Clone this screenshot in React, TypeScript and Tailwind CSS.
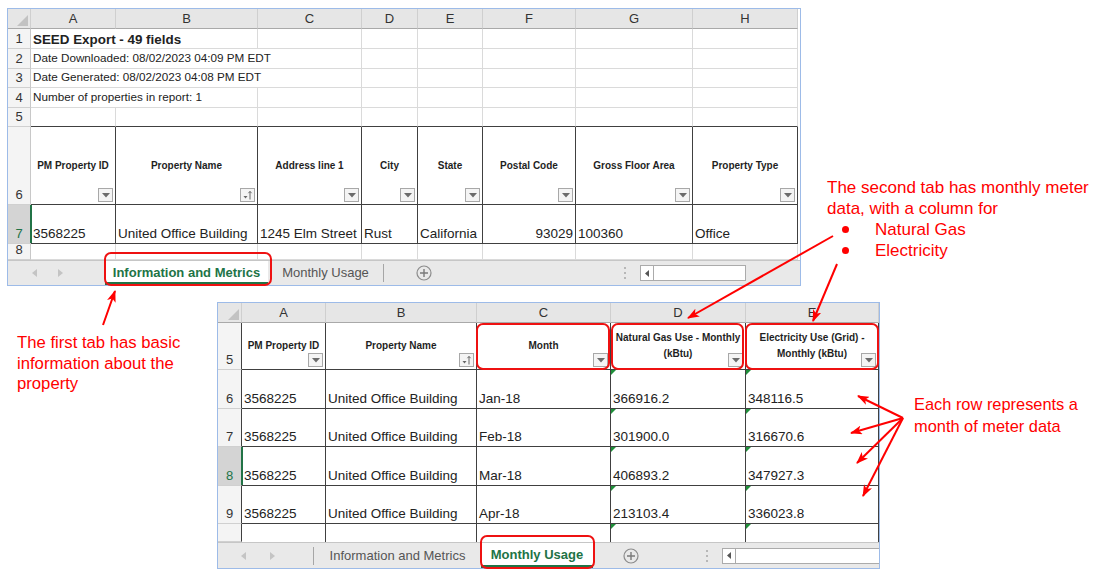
import clsx from "clsx";
import { ReactNode } from "react";

const FONT = "font-['Liberation_Sans',Arial,sans-serif]";

const FilterBtn = ({ sort = false }: { sort?: boolean }) => (
  <span className="absolute right-[2px] bottom-[2px] w-[15px] h-[14px] border border-[#a8a8a8] bg-[#f4f4f4] flex items-center justify-center">
    {sort ? (
      <svg width="11" height="10" viewBox="0 0 11 10">
        <path d="M1.5 6h4l-2 2.5z" fill="#666" />
        <path d="M8 9.5V1.5M6.4 3.2L8 1.4l1.6 1.8" stroke="#666" strokeWidth="1" fill="none" />
      </svg>
    ) : (
      <svg width="8" height="5" viewBox="0 0 8 5">
        <path d="M0 0h8L4 4.5z" fill="#6b6b6b" />
      </svg>
    )}
  </span>
);

interface CellProps {
  w: string;
  children?: ReactNode;
  dark?: boolean;
  darkBottom?: boolean;
  noBottom?: boolean;
  align?: "left" | "right";
  head?: boolean;
  filter?: "down" | "sort";
  flag?: boolean;
  active?: boolean;
  className?: string;
}

const Cell = ({ w, children, dark, darkBottom, noBottom, align = "left", head, filter, flag, active, className }: CellProps) => (
  <div
    className={clsx(
      "relative shrink-0 h-full border-r flex px-[2px]",
      w,
      !noBottom && "border-b",
      dark ? "border-r-[#404040]" : "border-r-[#dadada]",
      darkBottom ? "border-b-[#404040]" : "border-b-[#dadada]",
      head
        ? "items-center justify-center text-center font-bold text-[10px] leading-[16px] text-[#1f1f1f]"
        : clsx("items-end whitespace-nowrap pb-[1px] text-[13.5px] leading-[17px] text-[#222]", align === "right" ? "justify-end" : "justify-start"),
      className
    )}
  >
    {children}
    {flag && <span className="absolute left-0 top-0 w-0 h-0 border-t-[5px] border-t-[#1f8f3a] border-r-[5px] border-r-transparent" />}
    {active && <span className="absolute left-[-1px] top-0 bottom-0 w-[2px] bg-[#217346]" />}
    {filter && <FilterBtn sort={filter === "sort"} />}
  </div>
);

interface RowProps {
  h: string;
  n?: string;
  numW: string;
  active?: boolean;
  darkNum?: boolean;
  children: ReactNode;
}

const Row = ({ h, n, numW, active, darkNum, children }: RowProps) => (
  <div className={clsx("flex shrink-0", h)}>
    <div
      className={clsx(
        "shrink-0 h-full border-r border-b border-b-[#d0d0d0] flex items-end justify-center pb-[1px] text-[13px] leading-[17px]",
        numW,
        darkNum ? "border-r-[#404040]" : "border-r-[#c8c8c8]",
        active ? "bg-[#d4d4d4] text-[#217346]" : "bg-[#f4f4f4] text-[#333]"
      )}
    >
      {n}
    </div>
    {children}
  </div>
);

const Letters = ({ numW, cols }: { numW: string; cols: [string, string][] }) => (
  <div className="flex shrink-0 h-[20px]">
    <div className={clsx("shrink-0 h-full bg-[#e6e6e6] border-r border-b border-r-[#cfcfcf] border-b-[#a9a9a9] flex items-end justify-end p-[2px]", numW)}>
      <svg width="11" height="11" viewBox="0 0 11 11">
        <path d="M11 0V11H0z" fill="#c2c2c2" />
      </svg>
    </div>
    {cols.map(([w, l]) => (
      <div
        key={l}
        className={clsx("shrink-0 h-full bg-[#e6e6e6] border-r border-b border-r-[#cfcfcf] border-b-[#a9a9a9] flex items-center justify-center text-[13px] text-[#333]", w)}
      >
        {l}
      </div>
    ))}
  </div>
);

const NavArrows = ({ gap }: { gap: string }) => (
  <div className={clsx("flex items-center", gap)}>
    <svg width="5" height="8" viewBox="0 0 5 8">
      <path d="M5 0v8L0 4z" fill="#c4c4c4" />
    </svg>
    <svg width="5" height="8" viewBox="0 0 5 8">
      <path d="M0 0v8l5-4z" fill="#c4c4c4" />
    </svg>
  </div>
);

const PlusCircle = () => (
  <svg width="16" height="16" viewBox="0 0 16 16" className="shrink-0">
    <circle cx="8" cy="8" r="7" fill="none" stroke="#8c8c8c" strokeWidth="1.2" />
    <path d="M8 4v8M4 8h8" stroke="#7a7a7a" strokeWidth="1.4" />
  </svg>
);

const Dots = () => (
  <svg width="4" height="14" viewBox="0 0 4 14" className="shrink-0">
    <circle cx="2" cy="2" r="1" fill="#a6a6a6" />
    <circle cx="2" cy="7" r="1" fill="#a6a6a6" />
    <circle cx="2" cy="12" r="1" fill="#a6a6a6" />
  </svg>
);

const ScrollBox = ({ track }: { track: string }) => (
  <div className="flex items-center shrink-0">
    <div className="w-[14px] h-[16px] border border-[#ababab] bg-white flex items-center justify-center">
      <svg width="4" height="7" viewBox="0 0 4 7">
        <path d="M4 0v7L0 3.5z" fill="#555" />
      </svg>
    </div>
    <div className={clsx("h-[16px] border border-l-0 border-[#ababab] bg-white", track)} />
  </div>
);

const Tab = ({ w, active, children }: { w: string; active?: boolean; children: ReactNode }) => (
  <div
    className={clsx(
      "shrink-0 h-full flex items-center justify-center text-[13px]",
      w,
      active ? "bg-white border-b-[3px] border-b-[#217346] font-bold text-[#217346] pt-[2px]" : "text-[#555]"
    )}
  >
    {children}
  </div>
);

const TopSheet = () => {
  const W1 = "w-[23px]";
  const cols: [string, string][] = [
    ["w-[85px]", "A"],
    ["w-[142px]", "B"],
    ["w-[104px]", "C"],
    ["w-[56px]", "D"],
    ["w-[65px]", "E"],
    ["w-[93px]", "F"],
    ["w-[117px]", "G"],
    ["w-[105px]", "H"],
  ];
  const rest = ["w-[104px]", "w-[56px]", "w-[65px]", "w-[93px]", "w-[117px]", "w-[105px]"];
  const heads: [string, "down" | "sort"][] = [
    ["PM Property ID", "down"],
    ["Property Name", "sort"],
    ["Address line 1", "down"],
    ["City", "down"],
    ["State", "down"],
    ["Postal Code", "down"],
    ["Gross Floor Area", "down"],
    ["Property Type", "down"],
  ];
  const values: [string, "left" | "right"][] = [
    ["3568225", "left"],
    ["United Office Building", "left"],
    ["1245 Elm Street", "left"],
    ["Rust", "left"],
    ["California", "left"],
    ["93029", "right"],
    ["100360", "left"],
    ["Office", "left"],
  ];

  return (
    <div className="absolute left-[7px] top-[8px] w-[794px] h-[278px] border border-[#9dbbe8] bg-white flex flex-col overflow-hidden">
      <Letters numW={W1} cols={cols} />
      <Row h="h-[20px]" n="1" numW={W1}>
        <Cell w="w-[227px]" className="!text-[13.4px] font-bold !pb-0">SEED Export - 49 fields</Cell>
        {rest.map((w, i) => <Cell key={i} w={w} />)}
      </Row>
      <Row h="h-[20px]" n="2" numW={W1}>
        <Cell w="w-[331px]" className="!text-[11.7px] !pb-[2px]">Date Downloaded: 08/02/2023 04:09 PM EDT</Cell>
        {rest.slice(1).map((w, i) => <Cell key={i} w={w} />)}
      </Row>
      <Row h="h-[19px]" n="3" numW={W1}>
        <Cell w="w-[331px]" className="!text-[11.7px] !pb-[2px]">Date Generated: 08/02/2023 04:08 PM EDT</Cell>
        {rest.slice(1).map((w, i) => <Cell key={i} w={w} />)}
      </Row>
      <Row h="h-[20px]" n="4" numW={W1}>
        <Cell w="w-[227px]" className="!text-[11.7px] !pb-[2px]">Number of properties in report: 1</Cell>
        {rest.map((w, i) => <Cell key={i} w={w} />)}
      </Row>
      <Row h="h-[19px]" n="5" numW={W1}>
        {cols.map(([w]) => <Cell key={w} w={w} darkBottom />)}
      </Row>
      <Row h="h-[78px]" n="6" numW={W1}>
        {cols.map(([w], i) => (
          <Cell key={w} w={w} dark darkBottom head filter={heads[i][1]}>
            {heads[i][0]}
          </Cell>
        ))}
      </Row>
      <Row h="h-[39px]" n="7" numW={W1} active>
        {cols.map(([w], i) => (
          <Cell key={w} w={w} dark darkBottom align={values[i][1]} active={i === 0}>
            {values[i][0]}
          </Cell>
        ))}
      </Row>
      <Row h="h-[16px]" n="8" numW={W1}>
        {cols.map(([w]) => <Cell key={w} w={w} />)}
      </Row>
      <div className="flex items-center h-[25px] shrink-0 bg-[#e9e9e9] border-t border-[#c6c6c6]">
        <div className="w-[97px] h-full flex items-center pl-[24px] shrink-0">
          <NavArrows gap="gap-[21px]" />
        </div>
        <Tab w="w-[163px]" active>Information and Metrics</Tab>
        <Tab w="w-[115px]">Monthly Usage</Tab>
        <div className="w-px h-[18px] bg-[#a6a6a6] shrink-0" />
        <div className="ml-[32px]">
          <PlusCircle />
        </div>
        <div className="ml-[191px]">
          <Dots />
        </div>
        <div className="ml-[13px]">
          <ScrollBox track="w-[92px]" />
        </div>
      </div>
    </div>
  );
};

const BottomSheet = () => {
  const W2 = "w-[24px]";
  const cols: [string, string][] = [
    ["w-[84px]", "A"],
    ["w-[151px]", "B"],
    ["w-[134px]", "C"],
    ["w-[135px]", "D"],
    ["w-[133px]", "E"],
  ];
  const data = [
    ["6", "Jan-18", "366916.2", "348116.5"],
    ["7", "Feb-18", "301900.0", "316670.6"],
    ["8", "Mar-18", "406893.2", "347927.3"],
    ["9", "Apr-18", "213103.4", "336023.8"],
  ];
  const heights = ["h-[39px]", "h-[38px]", "h-[39px]", "h-[38px]"];

  return (
    <div className="absolute left-[217px] top-[302px] w-[663px] h-[267px] border border-[#9dbbe8] bg-white flex flex-col overflow-hidden">
      <Letters numW={W2} cols={cols} />
      <Row h="h-[47px]" n="5" numW={W2} darkNum>
        <Cell w="w-[84px]" dark darkBottom head filter="down">PM Property ID</Cell>
        <Cell w="w-[151px]" dark darkBottom head filter="sort">Property Name</Cell>
        <Cell w="w-[134px]" dark darkBottom head filter="down">Month</Cell>
        <Cell w="w-[135px]" dark darkBottom head filter="down">
          <span>
            Natural Gas Use - Monthly
            <br />
            (kBtu)
          </span>
        </Cell>
        <Cell w="w-[133px]" dark darkBottom head filter="down">
          <span>
            Electricity Use (Grid) -
            <br />
            Monthly (kBtu)
          </span>
        </Cell>
      </Row>
      {data.map(([n, month, gas, elec], i) => (
        <Row key={n} h={heights[i]} n={n} numW={W2} darkNum active={n === "8"}>
          <Cell w="w-[84px]" dark darkBottom active={n === "8"}>3568225</Cell>
          <Cell w="w-[151px]" dark darkBottom>United Office Building</Cell>
          <Cell w="w-[134px]" dark darkBottom>{month}</Cell>
          <Cell w="w-[135px]" dark darkBottom flag>{gas}</Cell>
          <Cell w="w-[133px]" dark darkBottom flag>{elec}</Cell>
        </Row>
      ))}
      <Row h="h-[18px]" numW={W2} darkNum>
        <Cell w="w-[84px]" dark noBottom />
        <Cell w="w-[151px]" dark noBottom />
        <Cell w="w-[134px]" dark noBottom />
        <Cell w="w-[135px]" dark noBottom flag />
        <Cell w="w-[133px]" dark noBottom flag />
      </Row>
      <div className="flex items-center h-[26px] shrink-0 bg-[#e9e9e9] border-t border-[#c6c6c6]">
        <div className="w-[95px] h-full flex items-center pl-[23px] shrink-0">
          <NavArrows gap="gap-[24px]" />
        </div>
        <div className="w-px h-[18px] bg-[#a6a6a6] shrink-0" />
        <Tab w="w-[167px]">Information and Metrics</Tab>
        <Tab w="w-[112px]" active>Monthly Usage</Tab>
        <div className="ml-[30px]">
          <PlusCircle />
        </div>
        <div className="ml-[66px]">
          <Dots />
        </div>
        <div className="ml-[13px]">
          <ScrollBox track="w-[150px]" />
        </div>
      </div>
    </div>
  );
};

const Arrows = () => {
  const lines: [number, number, number, number][] = [
    [103, 325, 115, 291],
    [833, 236, 688, 318],
    [837, 264, 813, 321],
    [903, 418, 858, 396],
    [903, 418, 851, 433],
    [903, 418, 857, 463],
    [903, 418, 863, 496],
  ];
  return (
    <svg className="absolute left-0 top-0 pointer-events-none" width="1096" height="575">
      <defs>
        <marker id="head" markerUnits="userSpaceOnUse" markerWidth="12" markerHeight="9" refX="11" refY="4.5" orient="auto">
          <path d="M0 0L12 4.5L0 9L3 4.5z" fill="#ff0000" />
        </marker>
      </defs>
      {lines.map(([x1, y1, x2, y2], i) => (
        <line key={i} x1={x1} y1={y1} x2={x2} y2={y2} stroke="#ff0000" strokeWidth="2" markerEnd="url(#head)" />
      ))}
    </svg>
  );
};

const Callout = ({ className }: { className: string }) => (
  <div className={clsx("absolute border-2 border-[#ee1111] rounded-[7px] pointer-events-none", className)} />
);

export default function App() {
  return (
    <div className={clsx("relative w-[1096px] h-[575px] bg-white overflow-hidden", FONT)}>
      <TopSheet />
      <BottomSheet />

      <Callout className="left-[104px] top-[252px] w-[168px] h-[34px]" />
      <Callout className="left-[480px] top-[535px] w-[115px] h-[34px]" />
      <Callout className="left-[476px] top-[323px] w-[134px] h-[47px]" />
      <Callout className="left-[611px] top-[323px] w-[133px] h-[47px]" />
      <Callout className="left-[745px] top-[323px] w-[134px] h-[47px]" />

      <div className="absolute left-[17px] top-[333px] text-[16.7px] leading-[20.5px] text-[#ff0000]">
        The first tab has basic
        <br />
        information about the
        <br />
        property
      </div>

      <div className="absolute left-[827px] top-[177px] text-[17px] leading-[21px] text-[#ff0000]">
        <div>The second tab has monthly meter</div>
        <div>data, with a column for</div>
        <div className="flex items-center">
          <span className="ml-[15px] w-[7px] h-[7px] rounded-full bg-[#ff0000]" />
          <span className="ml-[26px]">Natural Gas</span>
        </div>
        <div className="flex items-center">
          <span className="ml-[15px] w-[7px] h-[7px] rounded-full bg-[#ff0000]" />
          <span className="ml-[26px]">Electricity</span>
        </div>
      </div>

      <div className="absolute left-[914px] top-[393px] text-[16.4px] leading-[22px] text-[#ff0000]">
        Each row represents a
        <br />
        month of meter data
      </div>

      <Arrows />
    </div>
  );
}
